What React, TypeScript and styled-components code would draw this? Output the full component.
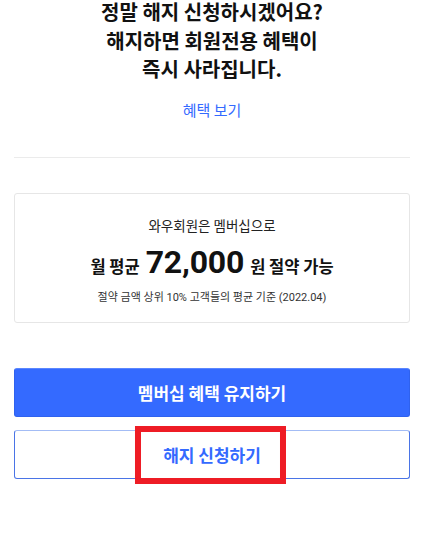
import React from "react";
import styled, { createGlobalStyle } from "styled-components";

const Global = createGlobalStyle`
  html, body { margin: 0; padding: 0; background: #fff; }
  body { font-family: Roboto, "Noto Sans CJK KR", sans-serif; -webkit-font-smoothing: antialiased; }
  * { box-sizing: border-box; }
`;

const Page = styled.div`
  display: flex;
  flex-direction: column;
  align-items: stretch;
  padding: 0 18px 0 14px;
  width: 428px;
  height: 540px;
  overflow: hidden;
`;

const Headline = styled.h1`
  margin: -2px 0 0;
  text-align: center;
  font-family: "Noto Sans CJK KR", sans-serif;
  font-weight: 700;
  font-size: 20px;
  line-height: 28.5px;
  color: #111;
`;

const Link = styled.a`
  display: block;
  margin-top: 16px;
  text-align: center;
  font-family: "Noto Sans CJK KR", sans-serif;
  font-size: 15px;
  line-height: 20px;
  color: #346aff;
  text-decoration: none;
`;

const Divider = styled.hr`
  margin: 37px 0 0;
  border: 0;
  border-top: 1px solid #ebebeb;
  height: 0;
`;

const Card = styled.section`
  margin-top: 35px;
  height: 130px;
  border: 1px solid #e6e6e6;
  border-radius: 3px;
  display: flex;
  flex-direction: column;
  align-items: center;
  padding-top: 21px;
`;

const Lead = styled.p`
  margin: 0;
  font-family: "Noto Sans CJK KR", sans-serif;
  font-size: 13.5px;
  line-height: 20px;
  color: #222;
`;

const SavingRow = styled.div`
  margin-top: 9px;
  display: flex;
  align-items: baseline;
  gap: 6px;
  height: 36px;
`;

const SavingLabel = styled.span`
  font-family: "Noto Sans CJK KR", sans-serif;
  font-weight: 700;
  font-size: 16.5px;
  color: #111;
`;

const Amount = styled.span`
  font-family: Roboto, sans-serif;
  font-weight: 700;
  font-size: 32px;
  line-height: 36px;
  color: #111;
  letter-spacing: -0.2px;
`;

const Note = styled.p`
  margin: 10px 0 0;
  font-size: 11px;
  line-height: 16px;
  color: #333;
`;

const Buttons = styled.div`
  margin-top: 45px;
  display: flex;
  flex-direction: column;
  gap: 13px;
`;

const Button = styled.button<{ $primary?: boolean }>`
  position: relative;
  height: 49px;
  width: 100%;
  border-radius: 3px;
  font-family: "Noto Sans CJK KR", sans-serif;
  font-weight: 700;
  font-size: 17px;
  cursor: pointer;
  background: ${(p) => (p.$primary ? "#346aff" : "#fff")};
  color: ${(p) => (p.$primary ? "#fff" : "#346aff")};
  border: 1px solid ${(p) => (p.$primary ? "#2f62ee" : "#4a74e6")};
  border-top-color: ${(p) => (p.$primary ? "#5a86ff" : "#a3bcf5")};
`;

const Highlight = styled.span`
  position: absolute;
  left: 50%;
  top: -5px;
  width: 151px;
  height: 58px;
  transform: translateX(-51%);
  border: 6px solid #ee1c25;
  pointer-events: none;
`;

export default function App() {
  return (
    <>
      <Global />
      <Page>
        <Headline>
          정말 해지 신청하시겠어요?
          <br />
          해지하면 회원전용 혜택이
          <br />
          즉시 사라집니다.
        </Headline>
        <Link href="#">혜택 보기</Link>
        <Divider />
        <Card>
          <Lead>와우회원은 멤버십으로</Lead>
          <SavingRow>
            <SavingLabel>월 평균</SavingLabel>
            <Amount>72,000</Amount>
            <SavingLabel>원 절약 가능</SavingLabel>
          </SavingRow>
          <Note>절약 금액 상위 10% 고객들의 평균 기준 (2022.04)</Note>
        </Card>
        <Buttons>
          <Button $primary>멤버십 혜택 유지하기</Button>
          <Button>
            해지 신청하기
            <Highlight />
          </Button>
        </Buttons>
      </Page>
    </>
  );
}
